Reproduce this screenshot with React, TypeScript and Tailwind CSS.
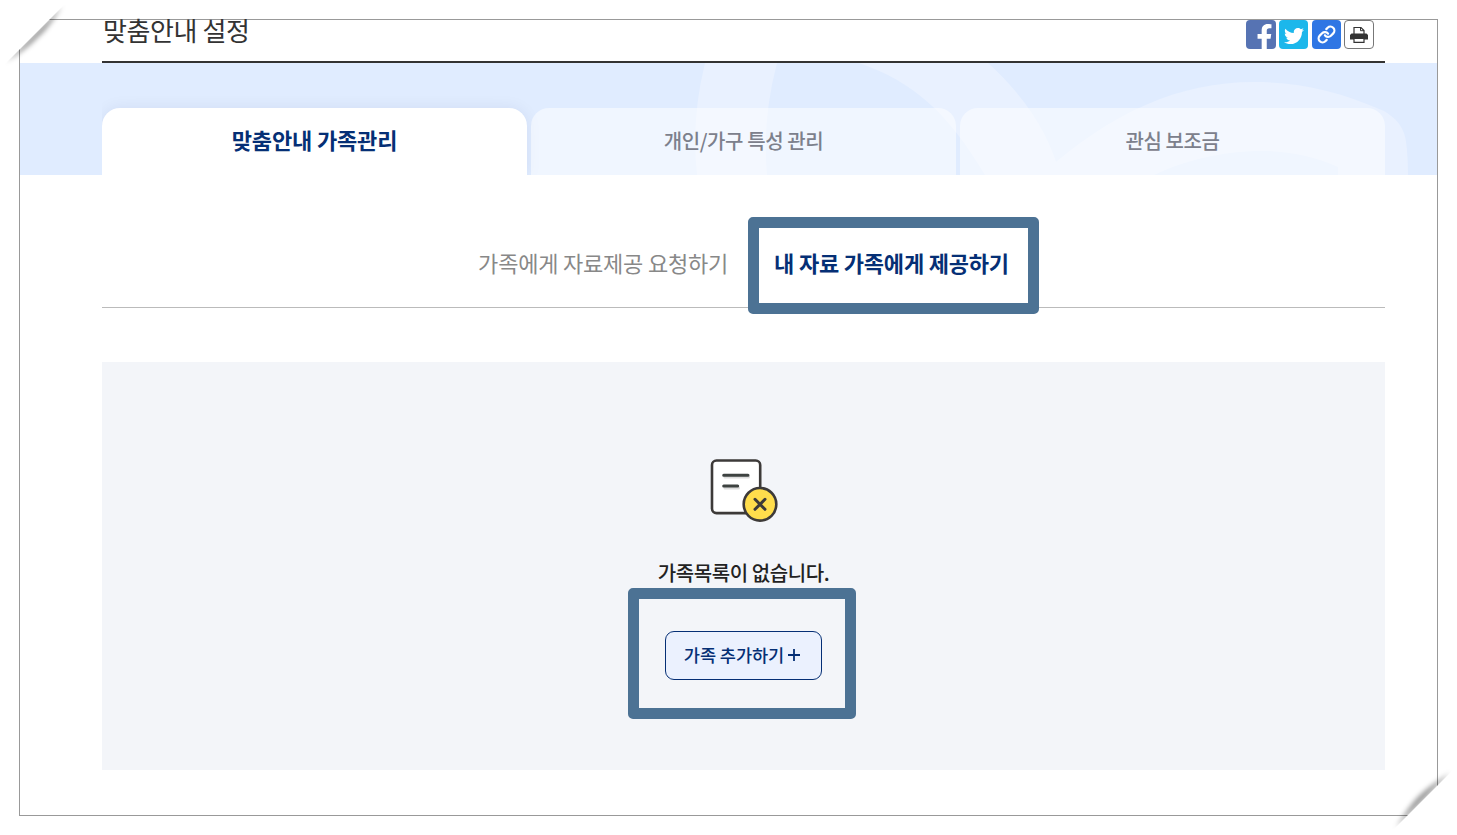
import React from 'react';
import { Link } from 'lucide-react';
import { FaFacebookF, FaTwitter } from 'react-icons/fa';

const tabs = [
  { label: '맞춤안내 가족관리', active: true },
  { label: '개인/가구 특성 관리', active: false },
  { label: '관심 보조금', active: false },
];

const PrinterIcon: React.FC = () => (
  <svg width="20" height="18" viewBox="0 0 20 18">
    <path d="M5 8V1.5h7l3 3V8" fill="#fff" stroke="#333" strokeWidth="1.2" />
    <path d="M11.5 1.5v3.2H15" fill="none" stroke="#333" strokeWidth="1" />
    <path d="M2.5 7.5h15L19 9v4.5H1V9z" fill="#333" />
    <path d="M5 12.4h10v3.9H5z" fill="#fff" stroke="#333" strokeWidth="1.2" />
  </svg>
);

const ShareButtons: React.FC = () => (
  <div className="flex pr-[11px]">
    <button className="relative w-[30px] h-[29px] mr-[3px] rounded bg-[#5673b3] text-white overflow-hidden">
      <FaFacebookF className="absolute left-[9px] top-[4px] w-[19px] h-[26px]" />
    </button>
    <button className="flex items-center justify-center w-[29px] h-[29px] mr-1 rounded bg-[#1cb7eb] text-white">
      <FaTwitter className="w-5 h-5 mt-0.5" />
    </button>
    <button className="flex items-center justify-center w-[29px] h-[29px] mr-[3px] rounded bg-[#2f76e4] text-white">
      <Link className="w-[19px] h-[19px]" strokeWidth={2.8} />
    </button>
    <button className="flex items-center justify-center w-[30px] h-[29px] rounded border border-[#777] bg-white">
      <PrinterIcon />
    </button>
  </div>
);

const HeroShapes: React.FC = () => (
  <svg className="absolute right-0 top-0" width="757" height="112" viewBox="681 63 757 112" fill="#e9f1ff">
    <path d="M706 63Q692 119 698 175H768Q763 119 778 63Z" />
    <path d="M860 63C915 82 949 113 986 175H1061C1052 139 1030 100 989 63Z" />
    <path d="M1042 175C1112 112 1180 82 1255 82C1300 82 1340 91 1385 111C1403 122 1407 133 1408 150Q1409 162 1409 175H1339V167C1315 156 1288 151 1263 151C1222 151 1185 161 1155 175Z" />
  </svg>
);

const EmptyIcon: React.FC = () => (
  <svg width="70" height="66" viewBox="0 0 70 66" strokeLinecap="round">
    <rect x="3" y="3.5" width="48.2" height="52.6" rx="4.5" fill="#fff" stroke="#3d3a39" strokeWidth="2.6" />
    <g strokeWidth="3">
      <path d="M16 20h23.5M16 31h13.5" stroke="#ddd" />
      <path d="M14.7 18.2h24.3M14.7 29h14" stroke="#3d4240" />
    </g>
    <circle cx="51" cy="47.3" r="16.3" fill="#ffdd4c" stroke="#3d3a39" strokeWidth="2.6" />
    <path d="M46 42.3l10 10M56 42.3l-10 10" stroke="#3d3a39" strokeWidth="3" />
  </svg>
);

// Folded page corners over the frame
const CornerFolds: React.FC = () => (
  <svg className="absolute inset-0 pointer-events-none" width="1457" height="835" viewBox="0 0 1457 835">
    <defs>
      <filter id="soft" x="-30%" y="-30%" width="160%" height="160%">
        <feGaussianBlur stdDeviation="2.6" />
      </filter>
    </defs>
    <path d="M6 62L62 6Q48 29 38 37Q28 48 6 62Z" fill="#000" fillOpacity="0.42" filter="url(#soft)" />
    <path d="M0 0H69L0 69Z" fill="#fff" />
    <path d="M1396 828L1450 773Q1428 787 1419 796Q1409 806 1396 828Z" fill="#000" fillOpacity="0.42" filter="url(#soft)" />
    <path d="M1457 835H1388L1457 766Z" fill="#fff" />
  </svg>
);

export default function App() {
  return (
    <div className="relative w-[1457px] h-[835px] p-[19px] bg-white overflow-hidden font-['Noto_Sans_CJK_KR','Noto_Sans',sans-serif]">
      <div className="w-[1419px] h-[797px] border border-[#999]">
        <header className="flex justify-between w-[1283px] h-[43px] ml-[82px] border-b-2 border-[#333]">
          <h1 className="-mt-px ml-px text-[26px] leading-[22px] tracking-[-0.4px] text-[#333]">맞춤안내 설정</h1>
          <ShareButtons />
        </header>

        <section className="relative h-[112px] bg-[#e0ecff]">
          <HeroShapes />
          <nav className="relative flex gap-1 w-[1283px] h-full ml-[82px] pt-[45px] overflow-hidden">
            {tabs.map((tab) => (
              <button
                key={tab.label}
                className={`w-[425px] h-[67px] rounded-t-[18px] ${
                  tab.active
                    ? 'pb-1 bg-white text-[22px] tracking-[-0.15px] font-bold text-[#052f75] shadow-[0_0_16px_rgba(0,30,90,0.07)]'
                    : 'pb-px bg-white/50 text-[20px] tracking-[-0.4px] font-medium text-[#7c808c]'
                }`}
              >
                {tab.label}
              </button>
            ))}
          </nav>
        </section>

        <main className="w-[1283px] ml-[82px]">
          <div className="flex justify-center h-[133px] border-b border-[#bbb] text-[22px] leading-[32px] tracking-[-0.2px]">
            <button className="h-[32px] mt-[71px] mr-[46px] text-[#888]">가족에게 자료제공 요청하기</button>
            <div className="relative h-[32px] mt-[71px]">
              <button className="font-bold text-[#052f75]">내 자료 가족에게 제공하기</button>
              <span className="absolute -left-[26px] -top-[29px] w-[291px] h-[97px] border-[11px] border-[#4c7294] rounded-[5px]" />
            </div>
          </div>

          <div className="flex flex-col items-center h-[408px] mt-[54px] pt-[95px] bg-[#f3f5f9]">
            <EmptyIcon />
            <p className="mt-[35px] text-[20px] leading-[30px] tracking-[-0.4px] font-medium text-[#222]">가족목록이 없습니다.</p>
            <div className="flex justify-center w-[228px] h-[131px] mr-[3px] pt-8 pl-[2px] border-[11px] border-[#4c7294] rounded-[5px]">
              <button className="flex items-center justify-center gap-1 w-[157px] h-[49px] pb-px pr-[2px] border border-[#052f75] rounded-[9px] bg-[#ebf1fe] text-[17.6px] tracking-[-0.1px] font-medium text-[#052f75]">
                가족 추가하기
                <svg width="12" height="12" viewBox="0 0 12 12" stroke="#052f75" strokeWidth="1.8">
                  <path d="M6 0v12M0 6h12" />
                </svg>
              </button>
            </div>
          </div>
        </main>
      </div>
      <CornerFolds />
    </div>
  );
}
